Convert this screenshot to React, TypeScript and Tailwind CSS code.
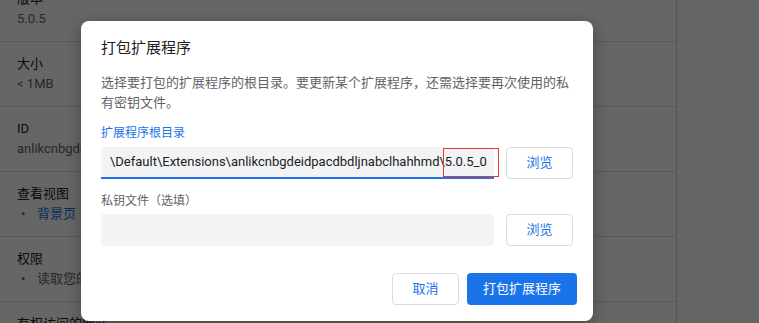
import React from "react";

const font = { fontFamily: 'Roboto, "Noto Sans CJK SC", sans-serif' };

type Section = { label: string; value?: string; bullet?: string; link?: boolean };

const sections: Section[] = [
  { label: "版本", value: "5.0.5" },
  { label: "大小", value: "< 1MB" },
  { label: "ID", value: "anlikcnbgdeidpacdbdljnabclhahhmd" },
  { label: "查看视图", bullet: "背景页", link: true },
  { label: "权限", bullet: "读取您的浏览记录" },
  { label: "有权访问的网站", value: "" },
];

function BackgroundPage() {
  return (
    <div className="flex h-[323px] overflow-hidden bg-white">
      <div className="w-[677px] border-r border-[#d6d6d6] bg-white">
        <div className="-mt-[23px] flex flex-col">
          {sections.map((s) => (
            <div key={s.label} className="h-[65px] shrink-0 border-b border-[#e0e0e0] px-[17px] pt-3 text-[13px] leading-5">
              <div className="text-[#202124]">{s.label}</div>
              {s.value !== undefined && <div className="text-[#5f6368]">{s.value}</div>}
              {s.bullet && (
                <div className="flex items-center">
                  <span className="w-5 pl-[4px] text-[#5f6368]">•</span>
                  <span className={s.link ? "text-[#1a73e8]" : "text-[#5f6368]"}>{s.bullet}</span>
                </div>
              )}
            </div>
          ))}
        </div>
      </div>
      <div className="flex-1 bg-[#fbfefc]" />
    </div>
  );
}

function BrowseButton() {
  return (
    <button className="flex h-[32px] w-[67px] shrink-0 items-center justify-center rounded border border-[#dadce0] bg-white text-[13px] text-[#1a73e8]">
      浏览
    </button>
  );
}

function PackDialog() {
  return (
    <div className="flex h-[300px] w-[512px] flex-col rounded-lg bg-white px-5 pt-4 pb-4 shadow-[0_4px_16px_rgba(0,0,0,0.3)]">
      <h2 className="text-[15px] leading-[22px] text-[#202124]">打包扩展程序</h2>
      <p className="mt-[14px] text-[13px] leading-5 text-[#5f6368]">
        选择要打包的扩展程序的根目录。要更新某个扩展程序，还需选择要再次使用的私有密钥文件。
      </p>

      <label className="mt-3 text-[12px] leading-4 text-[#1a73e8]">扩展程序根目录</label>
      <div className="mt-[6px] flex gap-3">
        <div className="relative flex h-[32px] flex-1 items-center rounded-t border-b-2 border-[#1a73e8] bg-[#f1f3f4] pl-[9px] text-[13px] text-[#202124]">
          <span className="whitespace-nowrap">\Default\Extensions\anlikcnbgdeidpacdbdljnabclhahhmd\5.0.5_0</span>
          <div className="absolute top-[1px] left-[342px] h-[29px] w-[56px] border border-[#e53935]" />
        </div>
        <BrowseButton />
      </div>

      <label className="mt-[14px] text-[12px] leading-4 text-[#5f6368]">私钥文件（选填）</label>
      <div className="mt-[5px] flex gap-3">
        <div className="h-[32px] flex-1 rounded bg-[#f1f3f4]" />
        <BrowseButton />
      </div>

      <div className="mt-auto flex justify-end gap-2 pr-[-4px]">
        <button className="flex h-[32px] w-[67px] items-center justify-center rounded border border-[#dadce0] bg-white text-[13px] text-[#1a73e8]">
          取消
        </button>
        <button className="-mr-1 flex h-[32px] w-[110px] items-center justify-center rounded bg-[#1a73e8] text-[13px] text-white">
          打包扩展程序
        </button>
      </div>
    </div>
  );
}

export default function App() {
  return (
    <div className="relative h-[323px] w-[759px] overflow-hidden" style={font}>
      <BackgroundPage />
      <div className="absolute inset-0 bg-black/60 pt-[21px] pl-[81px]">
        <PackDialog />
      </div>
    </div>
  );
}
